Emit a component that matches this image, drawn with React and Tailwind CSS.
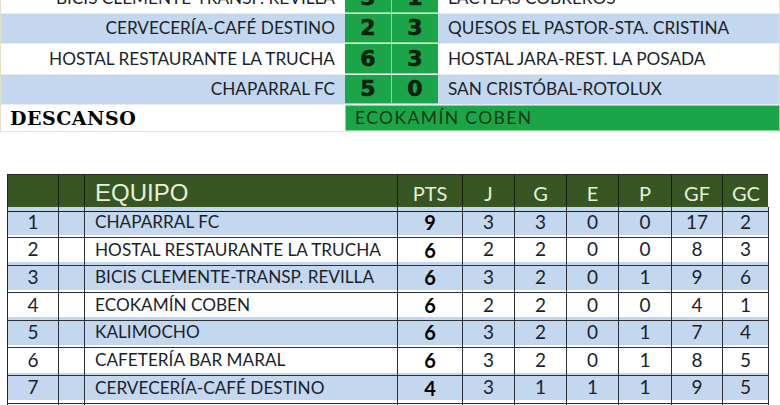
const matches = [
  { home: "BICIS CLEMENTE-TRANSP. REVILLA", a: 3, b: 1, away: "LÁCTEAS COBREROS", blue: false },
  { home: "CERVECERÍA-CAFÉ DESTINO", a: 2, b: 3, away: "QUESOS EL PASTOR-STA. CRISTINA", blue: true },
  { home: "HOSTAL RESTAURANTE LA TRUCHA", a: 6, b: 3, away: "HOSTAL JARA-REST. LA POSADA", blue: false },
  { home: "CHAPARRAL FC", a: 5, b: 0, away: "SAN CRISTÓBAL-ROTOLUX", blue: true },
]

const standings = [
  [1, "CHAPARRAL FC", 9, 3, 3, 0, 0, 17, 2],
  [2, "HOSTAL RESTAURANTE LA TRUCHA", 6, 2, 2, 0, 0, 8, 3],
  [3, "BICIS CLEMENTE-TRANSP. REVILLA", 6, 3, 2, 0, 1, 9, 6],
  [4, "ECOKAMÍN COBEN", 6, 2, 2, 0, 0, 4, 1],
  [5, "KALIMOCHO", 6, 3, 2, 0, 1, 7, 4],
  [6, "CAFETERÍA BAR MARAL", 6, 3, 2, 0, 1, 8, 5],
  [7, "CERVECERÍA-CAFÉ DESTINO", 4, 3, 1, 1, 1, 9, 5],
  [8, "", "", "", "", "", "", "", ""],
]

const calibri = { fontFamily: "Lato, 'Open Sans', sans-serif" }

const App = () => {
  return (
    <div className="w-[780px] h-[405px] overflow-hidden bg-white text-[#1b1f2a]" style={calibri}>
      {/* Resultados */}
      <div className="mt-[-17px] border-l border-[#e4e0c8]">
        {matches.map((m, i) => (
          <div key={i} className="flex h-[30.5px] border-b border-[#e8ecf2]">
            <div
              className={`w-[344px] flex items-center justify-end pr-[10px] text-[17.2px] ${m.blue ? "bg-[#c3d7ef]" : "bg-white"}`}
            >
              {m.home}
            </div>
            <div className="w-[47px] flex items-center justify-center bg-[#1ca449] border-r border-b border-[#8ad892] text-[22px] font-bold text-[#10200f] font-['DejaVu_Sans',sans-serif] [-webkit-text-stroke:0.6px_#10200f]">
              {m.a}
            </div>
            <div className="w-[46px] flex items-center justify-center bg-[#1ca449] border-b border-[#8ad892] text-[22px] font-bold text-[#10200f] font-['DejaVu_Sans',sans-serif] [-webkit-text-stroke:0.6px_#10200f]">
              {m.b}
            </div>
            <div
              className={`flex-1 flex items-center pl-[10px] text-[17.2px] border-r border-[#e4e0c8] ${m.blue ? "bg-[#c3d7ef]" : "bg-white"}`}
            >
              {m.away}
            </div>
          </div>
        ))}
        <div className="flex h-[27px] border-b border-[#ece8d0]">
          <div className="w-[344px] flex items-center pl-[9px] text-[19px] font-bold text-black font-['DejaVu_Serif',serif] tracking-[0.5px]">
            DESCANSO
          </div>
          <div className="flex-1 flex items-center pl-[9px] bg-[#1ca449] border border-[#8ad892] text-[17.5px] tracking-[1.4px] text-[#0f3a17]">
            ECOKAMÍN COBEN
          </div>
        </div>
      </div>

      {/* Clasificación */}
      <div className="ml-[7px] mt-[42px] w-[761px] border-l border-t border-[#1e2a1a]">
        <div className="grid grid-cols-[51px_26px_313px_65px_52px_52px_52px_53px_51px_46px] h-[32px] bg-[#375623] text-[#e6f0da]">
          <div className="border-r border-b border-[#14200e]" />
          <div className="border-r border-b border-[#14200e]" />
          <div className="border-r border-b border-[#14200e] flex items-center pl-[10px] text-[24px] font-['Liberation_Sans',sans-serif]">
            EQUIPO
          </div>
          {["PTS", "J", "G", "E", "P", "GF", "GC"].map((h, i) => (
            <div
              key={h}
              className={`border-b border-[#14200e] flex items-center justify-center text-[20px] ${i < 6 ? "border-r" : ""}`}
            >
              {h}
            </div>
          ))}
        </div>
        {standings.map((r, i) => (
          <div
            key={i}
            className={`grid grid-cols-[51px_26px_313px_65px_52px_52px_52px_53px_51px_46px] h-[27.6px] text-[19px] ${i % 2 === 0 ? "bg-[#c3d7ef]" : "bg-white"}`}
          >
            <div className="border-r border-b border-[#2a2f3a] flex items-center justify-center">{r[0]}</div>
            <div className="border-r border-b border-[#2a2f3a]" />
            <div className="border-r border-b border-[#2a2f3a] flex items-center pl-[10px] text-[17.2px]">{r[1]}</div>
            <div className="border-r border-b border-[#2a2f3a] flex items-center justify-center font-bold text-[20px] text-black">
              {r[2]}
            </div>
            {r.slice(3).map((v, j) => (
              <div key={j} className="border-r border-b border-[#2a2f3a] flex items-center justify-center">
                {v}
              </div>
            ))}
          </div>
        ))}
      </div>
    </div>
  )
}

export default App
